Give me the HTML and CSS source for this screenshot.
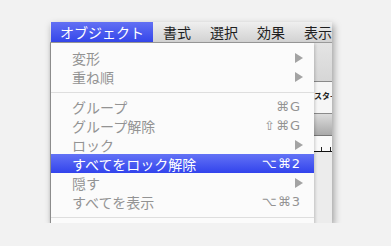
FILE: index.html
```html
<!DOCTYPE html>
<html lang="ja">
<head>
    <meta charset="UTF-8">
    <title>オブジェクト メニュー</title>
    <link rel="stylesheet" href="styles.css">
</head>
<body>
    <div class="screen">
        <div class="menubar">
            <div class="menubar-item active">オブジェクト</div>
            <div class="menubar-item">書式</div>
            <div class="menubar-item">選択</div>
            <div class="menubar-item">効果</div>
            <div class="menubar-item">表示</div>
        </div>

        <div class="content">
            <ul class="menu">
                <li class="menu-item">変形<span class="submenu"></span></li>
                <li class="menu-item">重ね順<span class="submenu"></span></li>
                <li class="separator"></li>
                <li class="menu-item">グループ<span class="shortcut">⌘G</span></li>
                <li class="menu-item">グループ解除<span class="shortcut">⇧⌘G</span></li>
                <li class="menu-item">ロック<span class="submenu"></span></li>
                <li class="menu-item selected">すべてをロック解除<span class="shortcut">⌥⌘2</span></li>
                <li class="menu-item">隠す<span class="submenu"></span></li>
                <li class="menu-item">すべてを表示<span class="shortcut">⌥⌘3</span></li>
                <li class="separator"></li>
            </ul>

            <!-- app window peeking out behind the menu -->
            <div class="strip">
                <div class="strip-toolbar"></div>
                <div class="strip-panel">スタ-</div>
                <div class="strip-tabs"></div>
                <div class="strip-ruler"><span class="tick"></span><span class="tick"></span></div>
                <div class="strip-canvas"></div>
            </div>
        </div>
    </div>
</body>
</html>
```

FILE: styles.css
```css
body {
    margin: 0;
    background-color: #f2f2f2;
    font-family: "Noto Sans CJK JP", "DejaVu Sans", sans-serif;
}

.screen {
    width: 282px;
    margin: 22px 0 0 50px;
    box-shadow: 2px 3px 7px rgba(0, 0, 0, 0.35);
}

.menubar {
    display: flex;
    height: 20px;
    background: linear-gradient(#efefef, #d2d2d2);
    border-bottom: 1px solid #9a9a9a;
    overflow: hidden;
}

.menubar-item {
    padding: 0 9px 0 10px;
    font-size: 14px;
    line-height: 20px;
    color: #1e1e1e;
    white-space: nowrap;
}

.menubar-item.active {
    padding: 0 9px;
    margin-left: 1px;
    color: #fff;
    background: linear-gradient(#6270f4, #3446ea);
}

.content {
    display: flex;
    height: 180px;
}

.menu {
    list-style: none;
    margin: 0;
    padding: 5px 0 0 0;
    width: 264px;
    border-left: 1px solid #8c8c8c;
    border-bottom: 1px solid #8c8c8c;
    background-color: #fbfbfb;
    box-sizing: border-box;
    height: 181px;
    position: relative;
    z-index: 1;
    box-shadow: 1px 1px 3px rgba(0, 0, 0, 0.2);
}

.menu-item {
    display: flex;
    align-items: center;
    justify-content: space-between;
    height: 19px;
    padding: 0 14px 0 21px;
    font-size: 14px;
    color: #939393;
}

.menu-item.selected {
    color: #fff;
    background: linear-gradient(#6373f6, #3243ec);
}

.shortcut {
    font-family: "DejaVu Sans", sans-serif;
    font-size: 13px;
    letter-spacing: 1px;
    margin-right: -1px;
}

.submenu {
    width: 0;
    height: 0;
    margin-right: -3px;
    border-left: 8px solid #a3a3a3;
    border-top: 5px solid transparent;
    border-bottom: 5px solid transparent;
}

.separator {
    height: 1px;
    margin: 6px 0 4px;
    background-color: #dedede;
}

.strip {
    display: flex;
    flex-direction: column;
    width: 18px;
    background-color: #ececec;
}

.strip-toolbar {
    height: 38px;
    background: linear-gradient(#e4e4e4, #d6d6d6);
    border-bottom: 1px solid #8a8a8a;
}

.strip-panel {
    height: 31px;
    background-color: #f6f6f6;
    border-bottom: 1px solid #8a8a8a;
    font-size: 8px;
    font-weight: bold;
    line-height: 28px;
    color: #222;
    white-space: nowrap;
    overflow: hidden;
}

.strip-tabs {
    height: 21px;
    background: linear-gradient(#dcdcdc, #a9a9a9);
    border-bottom: 1px solid #777;
}

.strip-ruler {
    display: flex;
    align-items: flex-end;
    justify-content: space-between;
    height: 15px;
    padding: 0 1px 0 7px;
    background-color: #fafafa;
    border-bottom: 1px solid #111;
}

.tick {
    width: 1px;
    height: 4px;
    background-color: #222;
}

.strip-canvas {
    flex: 1;
    background-color: #ececec;
}
```
